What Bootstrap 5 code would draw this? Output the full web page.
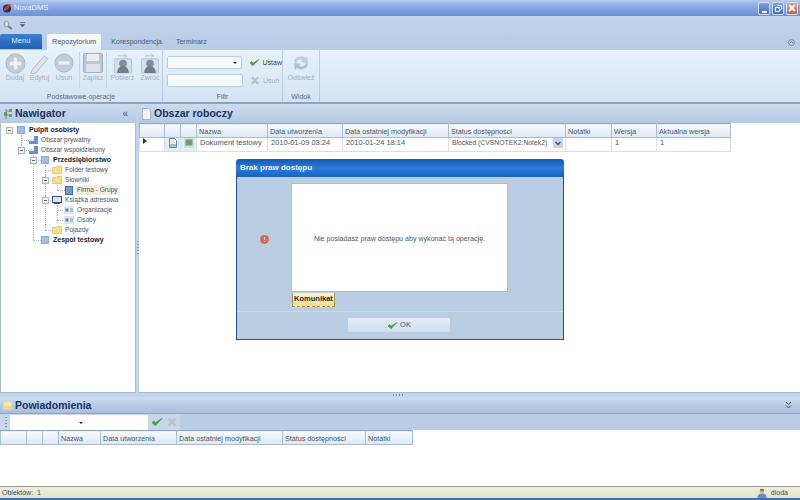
<!DOCTYPE html>
<html lang="pl">
<head>
  <meta charset="UTF-8" />
  <title>NovaDMS</title>
  <link href="https://cdn.jsdelivr.net/npm/bootstrap@5.3.0/dist/css/bootstrap.min.css" rel="stylesheet" />
  <style>
    html, body { height: 100%; }
    body { width: 800px; height: 500px; overflow: hidden; position: relative; background: #bfd1e8;
      font: 7.5px/10px "Liberation Sans", Arial, sans-serif; color: #3d4654; }
    svg { display: block; flex: none; }

    .titlebar { height: 16px; background: linear-gradient(#b4ccf0, #8fade4 35%, #6d90d6); color: #e8f0fb; padding: 0 2px; }
    .titlebar .app-name { font-size: 7.5px; margin-left: 2px; }
    .winbtn { width: 12px; height: 13px; margin-left: 2px; background: linear-gradient(#7ea3e0, #3f6cc2); border: 1px solid #d5e2f5; border-radius: 2px; }
    .winbtn.close-win { background: linear-gradient(#e99b86, #cf5a42); }

    .qat { height: 18px; background: linear-gradient(#c2d3ea, #bdd0e8); padding-left: 3px; gap: 7px; }

    .tabstrip { height: 16px; background: linear-gradient(#bdd0e8, #b8cce5); position: relative; }
    .tabstrip .nav-link { color: #4b5a70; font-size: 7px; line-height: 10px; padding: 3px 7px; border: 0; border-radius: 2px 2px 0 0; }
    .tabstrip .nav-link.active { background: linear-gradient(#f8fbfe, #e6f0fa); color: #4b5a70; height: 16px; padding: 3px 5px; margin-right: 3px; font-size: 7.2px; }
    .menu-tab { width: 42px; height: 15px; background: linear-gradient(#3f7fd0, #2160b4); color: #dfeafa; text-align: center; line-height: 14px; border-radius: 2px 2px 0 0; margin-right: 5px; }
    .tab-collapse { position: absolute; right: 5px; top: 5px; }

    .ribbon { height: 54px; background: linear-gradient(#e6f1fb, #dbe9f7 60%, #d3e3f4); border-bottom: 2px solid #8fa3bf; }
    .rgroup { border-right: 1px solid #bccde2; height: 52px; padding-top: 2px; position: relative; }
    .rgroup-label { position: absolute; left: 0; right: 0; bottom: 0; text-align: center; color: #59687e; line-height: 10px; font-size: 7px; }
    .group-ops { width: 163px; }
    .group-filter { width: 120px; }
    .group-view { width: 37px; }
    .rbtn { height: 30px; color: #a4aebb; text-align: center; display: flex; flex-direction: column; align-items: center; justify-content: space-between; padding: 1px 0 0; border: 0; background: none; font-size: 7px; line-height: 8px; white-space: nowrap; }
    .rb-19 { width: 19px; } .rb-24 { width: 24px; } .rb-26 { width: 26px; } .rb-30 { width: 30px; } .rb-31 { width: 31px; }
    .rsep { width: 1px; height: 36px; background: #c6d5e6; }
    .filter-input { width: 76px; height: 13px; padding: 0; border: 1px solid #bcccdf; border-radius: 2px; background: #f6fafd; margin-right: 4px; }
    .filter-select { position: relative; }
    .filter-select::after { content: ""; position: absolute; right: 4px; top: 5px; border: 2px solid transparent; border-top: 2px solid #222; }
    .filter-row { height: 13px; padding-left: 4px; margin-top: 4px; font-size: 7px; gap: 3px; }
    .filter-row + .filter-row { margin-top: 5px; }
    .filter-off { color: #a4aebb; }

    .panelhead { height: 19px; background: linear-gradient(#ccdcef, #b4c9e2); color: #17335f; font-weight: 700; font-size: 10.5px; line-height: 19px; }
    .phead-icon { margin: 0 3px 0 3px; }
    .main-area { height: 289px; }
    .nav-panel { width: 136px; }
    .vsplit { width: 3px; background: #c2d4ea; position: relative; }
    .work-panel { width: 661px; }
    .pane-white { background: #fff; border: 1px solid #a9bbd1; border-top: 0; }
    .work-pane { border-left: 0; border-right: 0; }
    .collapse-mark { color: #44566f; font-size: 10px; font-weight: 400; }

    .tree, .tree ul { list-style: none; margin: 0; padding: 0; }
    .tree { padding: 2px 0 0 2px; font-size: 6.6px; color: #4a5566; }
    .tree ul { padding-left: 12px; }
    .tree li { position: relative; }
    .tree ul > li::before { content: ""; position: absolute; left: 6px; top: 0; bottom: 0; border-left: 1px dotted #aab2bd; }
    .tree ul > li:last-child::before { bottom: auto; height: 5px; }
    .tree ul > li::after { content: ""; position: absolute; left: 6px; top: 5px; width: 8px; border-top: 1px dotted #aab2bd; }
    .trow { height: 10px; display: flex; align-items: center; position: relative; z-index: 1; }
    .exp { width: 12px; height: 10px; flex: none; display: flex; align-items: center; justify-content: center; }
    .exp i { display: block; width: 7px; height: 7px; border: 1px solid #a7b1bf; background: linear-gradient(90deg, transparent 1px, #666 1px, #666 4px, transparent 4px) center / 100% 1px no-repeat, #f3f5f8; }
    .ticon { width: 12px; display: flex; justify-content: center; flex: none; margin-right: 2px; }
    .tb { font-weight: 700; color: #1d2532; font-size: 7px; }
    .tsel { background: #f3efdf; padding: 0 2px; margin-left: -2px; }

    .grid { font-size: 7.2px; table-layout: fixed; margin: 0; border-collapse: collapse; color: #3d4654; }
    .grid th, .grid td { height: 14px; padding: 0 2px; font-weight: 400; line-height: 10px; border: 1px solid #d3e0ee; white-space: nowrap; overflow: hidden; background: #fff; box-shadow: none; color: #4b5666; }
    .grid td { font-size: 7.5px; padding-left: 3px; }
    .grid th { background: linear-gradient(#f7fafd, #dce8f5); border-color: #a9bdd6; border-top-color: #8da3c1; }
    .grid td.iconcell { background: #e3edf7; padding: 0; }
    .grid td.rowmark { background: #fff; padding: 0 0 0 3px; }
    .grid-top { width: 591px; }
    .grid-bottom { width: 412px; }
    .c25 { width: 25px; } .c16 { width: 16px; } .c71 { width: 71px; } .c75 { width: 75px; }
    .c106 { width: 106px; } .c117 { width: 117px; } .c46 { width: 46px; } .c45 { width: 45px; } .c74 { width: 74px; }
    .c26 { width: 26px; } .c42 { width: 42px; } .c76 { width: 76px; } .c83 { width: 83px; } .c47 { width: 47px; }
    .status-cell { display: flex; justify-content: space-between; align-items: center; font-size: 6.8px; }
    .dd-btn { width: 10px; height: 10px; background: #c6d6ea; display: flex; align-items: center; justify-content: center; flex: none; }

    .hsplit { height: 4px; background: #c2d4ea; position: relative; }
    .grip-h { position: absolute; left: 393px; top: 1px; width: 12px; height: 2px; background: repeating-linear-gradient(90deg, #8295ae 0 1px, transparent 1px 3px); }
    .grip-v { position: absolute; left: 1px; top: 137px; width: 2px; height: 14px; background: repeating-linear-gradient(#8295ae 0 1px, transparent 1px 3px); }

    .notif-head { height: 17px; background: linear-gradient(#cbdcf0, #a8bfdc); border-bottom: 1px solid #90a5c2; }
    .notif-tools { height: 16px; background: #b9cde4; }
    .tools-inner { width: 180px; height: 16px; background: #c6d7ec; padding-left: 10px; position: relative; }
    .tools-grip { position: absolute; left: 5px; top: 3px; width: 2px; height: 10px; background: repeating-linear-gradient(#8295ae 0 1px, transparent 1px 3px); }
    .tools-combo { width: 77px; height: 15px; background: #fff; position: relative; }
    .tools-combo::after { content: ""; position: absolute; right: 4px; top: 7px; border: 2px solid transparent; border-top: 2px solid #222; }
    .tools-field { width: 61px; height: 15px; background: #fff; margin-right: 3px; }
    .notif-body { height: 57px; background: #fff; border-bottom: 1px solid #9a9a8e; }

    .statusbar { height: 11px; background: linear-gradient(#efeddd, #e6e2cc); padding: 0 12px 0 2px; line-height: 11px; color: #454b52; font-size: 7px; }
    .bottomline { height: 2px; background: #3a72bb; }

    .dlg { position: absolute; left: 236px; top: 159px; width: 328px; height: 181px; background: #b9cde3; border: 1px solid #1d4f9c; border-top: 0; border-radius: 4px 4px 0 0; }
    .dlg-title { height: 18px; margin: 0 -1px; background: linear-gradient(#1458b4, #2c7cd6 50%, #1763c4); border-radius: 4px 4px 0 0; color: #eaf2fc; font-size: 8px; font-weight: 700; line-height: 18px; padding-left: 4px; }
    .dlg-row { height: 116px; }
    .dlg-icon { width: 54px; padding-top: 8px; }
    .dlg-white { width: 217px; height: 109px; background: #fff; border: 1px solid #a9bdd6; margin-top: 6px; text-align: center; padding-top: 50px; color: #4c5563; font-size: 7.1px; }
    .dlg-tab { position: absolute; left: 55px; top: 134px; width: 43px; height: 14px; background: linear-gradient(#fff3c8, #fbdc8a); border: 1px solid #a98f52; border-bottom-style: dashed; font-size: 7.5px; font-weight: 700; line-height: 12px; text-align: center; color: #2a2a2a; border-top: 0; }
    .dlg-foot { position: absolute; left: 0; right: 0; top: 152px; bottom: 0; border-top: 1px solid #ccd9e8; }
    .btn-ok { width: 102px; height: 14px; padding: 0; margin: 6px 0 0 111px; background: linear-gradient(#e2ecf7, #cfdeee); border: 0; border-radius: 1px; font-size: 7.5px; line-height: 10px; color: #4c5563; display: flex; justify-content: center; align-items: center; gap: 2px; }
    .btn-ok:hover { background: #dce8f5; color: #4c5563; }
  </style>
</head>
<body>
  <svg width="0" height="0" class="position-absolute">
    <symbol id="i-check" viewBox="0 0 12 10"><path d="M1 5.5 L4.3 8.6 L11 1.6 L4.6 5.6 L2.8 4 Z" fill="#5aa83c" stroke="#4b9433" stroke-width=".8" stroke-linejoin="round"/></symbol>
    <symbol id="i-x" viewBox="0 0 10 10"><path d="M1.5 1.5 L8.5 8.5 M8.5 1.5 L1.5 8.5" stroke="#b3bfcc" stroke-width="2.4"/></symbol>
    <symbol id="i-sq" viewBox="0 0 8 8"><rect width="8" height="8" fill="#8eacd8"/><rect x="1" y="1" width="6" height="6" fill="#a3bde2"/></symbol>
    <symbol id="i-drive" viewBox="0 0 9 8"><path d="M0 3h5V0h4v8H0z" fill="#6d8fc4"/><path d="M0 3h5v2H0z" fill="#dfe7f2"/></symbol>
    <symbol id="i-folder" viewBox="0 0 10 8"><path d="M.5 1.5H4L5 .5h4.5V7.5H.5z" fill="#fbdf86" stroke="#d8b95e" stroke-width=".7"/></symbol>
    <symbol id="i-book" viewBox="0 0 8 9"><rect width="8" height="9" fill="#456f9f"/><rect x="1" y="1" width="6" height="7" fill="#7399c6"/></symbol>
    <symbol id="i-screen" viewBox="0 0 10 8"><rect x=".5" y=".5" width="9" height="6" fill="#dbe6f3" stroke="#35517c"/><rect x="2" y="7" width="6" height="1" fill="#35517c"/></symbol>
    <symbol id="i-card" viewBox="0 0 10 8"><rect width="10" height="8" fill="#dfe6ef"/><rect x="1.5" y="2.5" width="3" height="3" fill="#6f7f95"/><path d="M6 3h3M6 5h3" stroke="#8796aa"/></symbol>
    <symbol id="i-person" viewBox="0 0 20 22"><rect x="1" y="6" width="18" height="15" rx="1" fill="#d5dfea" stroke="#b8c4d2"/><circle cx="10" cy="11" r="4" fill="#838b95"/><path d="M4 21c0-5 3-7 6-7s6 2 6 7z" fill="#747c86"/><path d="M5 3h9M11 1l3 2-3 2" stroke="#b7c3d1" fill="none"/></symbol>
  </svg>

  <div class="titlebar d-flex align-items-center">
    <svg width="10" height="11" viewBox="0 0 10 11"><circle cx="5" cy="5.5" r="4" fill="#28304a"/><path d="M1 8C3 3 7 1 9 1 8 4 5 8 1 8z" fill="#c9394a"/></svg>
    <span class="app-name">NovaDMS</span>
    <div class="ms-auto d-flex">
      <div class="winbtn d-flex align-items-end justify-content-center"><svg width="5" height="5" viewBox="0 0 5 5"><rect y="2" width="5" height="2" fill="#fff"/></svg></div>
      <div class="winbtn d-flex align-items-center justify-content-center"><svg width="7" height="7" viewBox="0 0 7 7"><path d="M2.5.5h4v4h-1M.5 2.500h4v4h-4z" fill="none" stroke="#fff"/></svg></div>
      <div class="winbtn close-win d-flex align-items-center justify-content-center"><svg width="8" height="8" viewBox="0 0 8 8"><path d="M1 1l6 6M7 1L1 7" stroke="#fff" stroke-width="2"/></svg></div>
    </div>
  </div>

  <div class="qat d-flex align-items-center">
    <svg width="10" height="9" viewBox="0 0 10 9"><circle cx="3.500" cy="3" r="2.500" fill="#dbe4ee" stroke="#8c98a8"/><path d="M5 5l4 3" stroke="#6e8a6c" stroke-width="2"/></svg>
    <svg width="5" height="6" viewBox="0 0 5 6"><path d="M0 .5h5M.5 2.500h4L2.500 5z" stroke="#55606f" stroke-width=".7" fill="#55606f"/></svg>
  </div>

  <div class="tabstrip d-flex">
    <div class="menu-tab">Menu</div>
    <ul class="nav">
      <li class="nav-item"><a class="nav-link active" href="#">Repozytorium</a></li>
      <li class="nav-item"><a class="nav-link" href="#">Korespondencja</a></li>
      <li class="nav-item"><a class="nav-link" href="#">Terminarz</a></li>
    </ul>
    <svg class="tab-collapse" width="7" height="7" viewBox="0 0 7 7"><circle cx="3.500" cy="3.500" r="3" fill="none" stroke="#6c7a8e" stroke-width=".7"/><path d="M1.800 4.200l1.700-1.700 1.700 1.700" fill="none" stroke="#4d5a6d" stroke-width=".8"/></svg>
  </div>

  <div class="ribbon d-flex">
    <div class="rgroup group-ops d-flex gap-0">
      <button class="rbtn rb-30"><svg width="21" height="21" viewBox="0 0 22 22"><circle cx="11" cy="11" r="10" fill="#c3ccd6" stroke="#a9b4c1"/><path d="M11 5v12M5 11h12" stroke="#eef2f6" stroke-width="3.500"/></svg>Dodaj</button>
      <button class="rbtn rb-19"><svg width="21" height="21" viewBox="0 0 22 22"><path d="M3 18L16 3l4 3L7 21l-5 1z" fill="#dce3eb" stroke="#b1bcc9"/></svg>Edytuj</button>
      <button class="rbtn rb-30"><svg width="20" height="20" viewBox="0 0 22 22"><circle cx="11" cy="11" r="10" fill="#c3ccd6" stroke="#a9b4c1"/><path d="M5 11h12" stroke="#eef2f6" stroke-width="3.500"/></svg>Usuń</button>
      <div class="rsep"></div>
      <button class="rbtn rb-26"><svg width="20" height="20" viewBox="0 0 20 20"><rect x=".5" y=".5" width="19" height="19" rx="1" fill="#bec8d4" stroke="#a5b0be"/><rect x="4" y="1" width="12" height="7" fill="#e9eef4"/><rect x="3" y="11" width="14" height="8" fill="#dce3eb"/></svg>Zapisz</button>
      <div class="rsep"></div>
      <button class="rbtn rb-31"><svg width="20" height="21"><use href="#i-person"/></svg>Pobierz</button>
      <button class="rbtn rb-24"><svg width="20" height="21"><use href="#i-person"/></svg>Zwróć</button>
      <div class="rgroup-label">Podstawowe operacje</div>
    </div>
    <div class="rgroup group-filter">
      <div class="filter-row d-flex align-items-center">
        <div class="filter-input filter-select"></div>
        <svg width="11" height="9"><use href="#i-check"/></svg>
        <span>Ustaw</span>
      </div>
      <div class="filter-row d-flex align-items-center">
        <div class="filter-input"></div>
        <svg width="10" height="9"><use href="#i-x"/></svg>
        <span class="filter-off">Usuń</span>
      </div>
      <div class="rgroup-label">Filtr</div>
    </div>
    <div class="rgroup group-view">
      <button class="rbtn w-100"><svg width="20" height="20" viewBox="0 0 20 20"><path d="M3 9C4 4 10 2 14 5l2-2 1 7-7-1 2-2C10 6 6 6 5 10z" fill="#c3ccd6"/><path d="M17 11c-1 5-7 7-11 4l-2 2-1-7 7 1-2 2c2 1 6 1 7-3z" fill="#b5bfca"/></svg>Odśwież</button>
      <div class="rgroup-label">Widok</div>
    </div>
  </div>

  <div class="main-area d-flex">
    <div class="nav-panel d-flex flex-column">
      <div class="panelhead d-flex align-items-center">
        <svg class="phead-icon" width="9" height="12" viewBox="0 0 9 12"><path d="M3 1v10M3 3h4M3 7h4" stroke="#7f8d9e" fill="none"/><rect x="6" y="1" width="3" height="3" fill="#63a85a"/><rect x="6" y="6" width="3" height="3" fill="#63a85a"/><rect x="1" y="4" width="3" height="4" fill="#5f9a56"/></svg>
        <span>Nawigator</span>
        <span class="collapse-mark ms-auto me-2">«</span>
      </div>
      <div class="pane-white flex-grow-1">
        <ul class="tree">
          <li>
            <div class="trow"><span class="exp"><i></i></span><span class="ticon"><svg width="8" height="8"><use href="#i-sq"/></svg></span><span class="tb">Pulpit osobisty</span></div>
            <ul>
              <li><div class="trow"><span class="exp"></span><span class="ticon"><svg width="9" height="8"><use href="#i-drive"/></svg></span><span>Obszar prywatny</span></div></li>
              <li>
                <div class="trow"><span class="exp"><i></i></span><span class="ticon"><svg width="9" height="8"><use href="#i-drive"/></svg></span><span>Obszar współdzielony</span></div>
                <ul>
                  <li>
                    <div class="trow"><span class="exp"><i></i></span><span class="ticon"><svg width="8" height="8"><use href="#i-sq"/></svg></span><span class="tb">Przedsiębiorstwo</span></div>
                    <ul>
                      <li><div class="trow"><span class="exp"></span><span class="ticon"><svg width="10" height="8"><use href="#i-folder"/></svg></span><span>Folder testowy</span></div></li>
                      <li>
                        <div class="trow"><span class="exp"><i></i></span><span class="ticon"><svg width="10" height="8"><use href="#i-folder"/></svg></span><span>Słowniki</span></div>
                        <ul>
                          <li><div class="trow"><span class="exp"></span><span class="ticon"><svg width="8" height="9"><use href="#i-book"/></svg></span><span class="tsel">Firma - Grupy</span></div></li>
                        </ul>
                      </li>
                      <li>
                        <div class="trow"><span class="exp"><i></i></span><span class="ticon"><svg width="10" height="8"><use href="#i-screen"/></svg></span><span>Książka adresowa</span></div>
                        <ul>
                          <li><div class="trow"><span class="exp"></span><span class="ticon"><svg width="10" height="8"><use href="#i-card"/></svg></span><span>Organizacje</span></div></li>
                          <li><div class="trow"><span class="exp"></span><span class="ticon"><svg width="10" height="8"><use href="#i-card"/></svg></span><span>Osoby</span></div></li>
                        </ul>
                      </li>
                      <li><div class="trow"><span class="exp"></span><span class="ticon"><svg width="10" height="8"><use href="#i-folder"/></svg></span><span>Pojazdy</span></div></li>
                    </ul>
                  </li>
                  <li><div class="trow"><span class="exp"></span><span class="ticon"><svg width="8" height="8"><use href="#i-sq"/></svg></span><span class="tb">Zespół testowy</span></div></li>
                </ul>
              </li>
            </ul>
          </li>
        </ul>
      </div>
    </div>
    <div class="vsplit"><div class="grip-v"></div></div>
    <div class="work-panel d-flex flex-column">
      <div class="panelhead d-flex align-items-center">
        <svg class="phead-icon" width="9" height="12" viewBox="0 0 9 12"><path d="M.5.5h6l2 2v9h-8z" fill="#f1f5fa" stroke="#a8b6c8"/></svg>
        <span>Obszar roboczy</span>
      </div>
      <div class="pane-white work-pane flex-grow-1">
        <table class="table grid grid-top">
          <colgroup><col class="c25"><col class="c16"><col class="c16"><col class="c71"><col class="c75"><col class="c106"><col class="c117"><col class="c46"><col class="c45"><col class="c74"></colgroup>
          <thead><tr><th></th><th></th><th></th><th>Nazwa</th><th>Data utworzenia</th><th>Data ostatniej modyfikacji</th><th>Status dostępności</th><th>Notatki</th><th>Wersja</th><th>Aktualna wersja</th></tr></thead>
          <tbody>
            <tr>
              <td class="rowmark"><svg width="4" height="6" viewBox="0 0 4 6"><path d="M0 0l4 3-4 3z" fill="#26344a"/></svg></td>
              <td class="iconcell"><svg class="mx-auto" width="10" height="10" viewBox="0 0 10 10"><path d="M1.500.5h5l2 2v7h-7z" fill="#eef5fb" stroke="#5f8fb6"/><rect x="2" y="6" width="6" height="3" fill="#9ec9b9"/></svg></td>
              <td class="iconcell"><svg class="mx-auto" width="10" height="10" viewBox="0 0 10 10"><rect width="10" height="10" fill="#d5dfd6"/><rect x="1.500" y="1.500" width="7" height="6" fill="#6f9c72"/></svg></td>
              <td>Dokument testowy</td>
              <td>2010-01-09 03:24</td>
              <td>2010-01-24 18:14</td>
              <td><div class="status-cell"><span>Blocked (CVSNOTEK2:Notek2)</span><span class="dd-btn"><svg width="6" height="5" viewBox="0 0 6 5"><path d="M.5 1L3 3.500 5.500 1" fill="none" stroke="#2b4f8a" stroke-width="1.300"/></svg></span></div></td>
              <td></td>
              <td>1</td>
              <td>1</td>
            </tr>
          </tbody>
        </table>
      </div>
    </div>
  </div>

  <div class="hsplit"><div class="grip-h"></div></div>

  <div class="panelhead notif-head d-flex align-items-center">
    <svg class="phead-icon" width="9" height="9" viewBox="0 0 9 9"><rect width="9" height="9" rx="2" fill="#f6d874"/><rect x="1" y="1" width="7" height="4" rx="1" fill="#fbeaa8"/></svg>
    <span>Powiadomienia</span>
    <span class="ms-auto me-2 lh-1"><svg width="7" height="8" viewBox="0 0 7 8"><path d="M1 1l2.500 2.500L6 1M1 4.500L3.500 7 6 4.500" fill="none" stroke="#39475c"/></svg></span>
  </div>
  <div class="notif-tools">
    <div class="tools-inner d-flex align-items-center">
      <div class="tools-grip"></div>
      <div class="tools-combo"></div>
      <div class="tools-field"></div>
      <svg width="12" height="10"><use href="#i-check"/></svg>
      <svg class="ms-1" width="10" height="10"><use href="#i-x"/></svg>
    </div>
  </div>
  <div class="notif-body">
    <table class="table grid grid-bottom">
      <colgroup><col class="c26"><col class="c16"><col class="c16"><col class="c42"><col class="c76"><col class="c106"><col class="c83"><col class="c47"></colgroup>
      <thead><tr><th></th><th></th><th></th><th>Nazwa</th><th>Data utworzenia</th><th>Data ostatniej modyfikacji</th><th>Status dostępności</th><th>Notatki</th></tr></thead>
    </table>
  </div>

  <div class="statusbar d-flex align-items-center">
    <span>Obiektów:&nbsp; 1</span>
    <span class="ms-auto d-flex align-items-center gap-1"><svg width="10" height="10" viewBox="0 0 10 11"><circle cx="5" cy="3" r="2.500" fill="#d9a878"/><path d="M3 1.500h4V3H3z" fill="#7a5a3c"/><path d="M0 11c0-4 2-5 5-5s5 1 5 5z" fill="#5f8dc4"/></svg>dioda</span>
  </div>
  <div class="bottomline"></div>

  <div class="dlg">
    <div class="dlg-title">Brak praw dostępu</div>
    <div class="dlg-row d-flex">
      <div class="dlg-icon d-flex align-items-center justify-content-center">
        <svg width="9" height="9" viewBox="0 0 9 9"><circle cx="4.500" cy="4.500" r="4.500" fill="#d9685a"/><path d="M4.500 2v3M4.500 6v1" stroke="#fbe3dd"/></svg>
      </div>
      <div class="dlg-white">Nie posiadasz praw dostępu aby wykonać tą operację.</div>
    </div>
    <div class="dlg-tab">Komunikat</div>
    <div class="dlg-foot">
      <button class="btn btn-ok"><svg width="11" height="9"><use href="#i-check"/></svg>OK</button>
    </div>
  </div>

  <script src="https://cdn.jsdelivr.net/npm/bootstrap@5.3.0/dist/js/bootstrap.bundle.min.js"></script>
</body>
</html>
